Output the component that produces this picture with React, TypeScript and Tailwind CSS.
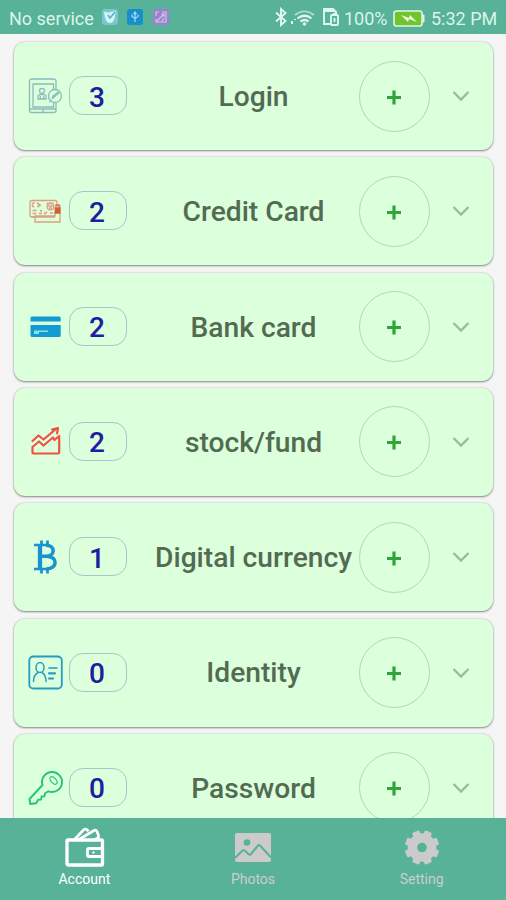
import React from "react";

const LoginIcon = () => (
  <svg viewBox="0 0 36 36" className="h-9 w-9" fill="none" stroke="#8bbcb9" strokeWidth="1.3">
    <path d="M28 11V3a2 2 0 0 0-2-2H3.500a2 2 0 0 0-2 2v29.500a2 2 0 0 0 2 2H26a2 2 0 0 0 2-2V25" />
    <path d="M25.500 11V6H5v23h20.500v-4M1.500 31H28M15 31v3" />
    <circle cx="14" cy="12.800" r="2.500" />
    <path d="M10 21v-3.200l2-1.300h4l2 1.300V21zM12.300 18v3M15.700 18v3" />
    <circle cx="27" cy="18" r="6.500" />
    <path d="m24 21 1-3 5-4 1 1-5 4zM21 24l3-1" />
  </svg>
);

const CreditIcon = () => (
  <svg viewBox="0 0 36 36" className="h-9 w-9" fill="none" stroke="#dda083" strokeWidth="1.300">
    <path d="M29 13v-4a1.500 1.500 0 0 0-1.500-1.500h-24A1.500 1.500 0 0 0 2 9v13.500A1.500 1.500 0 0 0 3.500 24h3" />
    <path d="M28 12.500h4V29H7v-6h20v-4M3.500 24H27" />
    <path d="M4 11.500 6.500 9M4 12.500l2 1.500M9 10l3 2-2.500 2M4.500 17.500h4M4.500 20.500h4M11 20.500h3M12 17.500l2 1M16 21l3-2" strokeWidth="1.700" />
    <circle cx="22.500" cy="13.500" r="3.300" />
    <path d="M18.500 10.500h7M20 13h5M21 15h3M22 20h3" />
    <path d="M27.300 15h4.500v5h-4.500z" fill="#d75b35" stroke="#d75b35" />
    <path d="M28 14v-2h3v2" stroke="#dc7650" />
  </svg>
);

const BankIcon = () => (
  <svg viewBox="0 0 36 36" className="h-9 w-9" fill="#119bd2">
    <path d="M4.200 7.500h27a1.500 1.500 0 0 1 1.500 1.500v3.500H2.500V9A1.500 1.500 0 0 1 4.200 7.500zM2.500 16h30.200v10.500a1.500 1.500 0 0 1-1.500 1.500H4a1.500 1.500 0 0 1-1.500-1.500z" />
    <path d="M6 21.500h14v1.600h-9v2H6z" fill="#8de0df" />
  </svg>
);

const StockIcon = () => (
  <svg viewBox="0 0 36 36" className="h-9 w-9" fill="none" stroke="#ef5143" strokeWidth="2.200" strokeLinecap="round" strokeLinejoin="round">
    <path d="m4.500 17 6-5.500 5 4L28 5M24 5.500l6-1.500-.9 5.500" />
    <path d="M4.500 23 11 17.500l4.500 4L25 13.500l1.500 2.500 4.700-4v16.500a1 1 0 0 1-1 1H5.500a1 1 0 0 1-1-1z" />
  </svg>
);

const BitcoinIcon = () => (
  <svg viewBox="0 0 36 36" className="h-9 w-9" fill="none" stroke="#1793d0">
    <path d="M13.500 1.500v5M19.500 1.500v5M13.500 29.500v5M19.500 29.500v5" strokeWidth="2.700" />
    <path d="M6 6h14M6 30h14" strokeWidth="2.300" />
    <path d="M12 6v24" strokeWidth="4.300" />
    <path d="M18 6.200c9.500 0 9.500 10.800 0 11h-5M18.500 17.200c11.500 0 11.500 12.600 0 12.600" strokeWidth="3.500" />
  </svg>
);

const IdentityIcon = () => (
  <svg viewBox="0 0 36 36" className="h-9 w-9" fill="none" stroke="#229cc6" strokeWidth="1.500" strokeLinecap="round">
    <rect x="1.300" y="1.500" width="32.500" height="32" rx="4" strokeWidth="1.800" />
    <ellipse cx="12" cy="12.500" rx="4" ry="5" />
    <path d="M5.500 26.500c0-5 2-7.500 4.500-9M14 17.500c2.500 1.500 4 4 4 9" />
    <path d="M21 13h8" />
    <path d="M21 18.300h6M21 23.500h4" strokeWidth="2.200" />
  </svg>
);

const KeyIcon = () => (
  <svg viewBox="0 0 36 36" className="h-9 w-9" fill="none" stroke="#20c875" strokeWidth="1.900" strokeLinejoin="round">
    <path d="M14.500 15A10 10 0 1 1 20.500 21.300l-3.500 2-.5 3-3 .2-.3 3-3 .3-2 3.500-6 .7-.7-5z" />
    <ellipse cx="25.500" cy="10.500" rx="2.500" ry="4.500" transform="rotate(-42 25.500 10.500)" strokeWidth="1.200" />
  </svg>
);

const accounts = [
  { title: "Login", count: 3, icon: <LoginIcon /> },
  { title: "Credit Card", count: 2, icon: <CreditIcon /> },
  { title: "Bank card", count: 2, icon: <BankIcon /> },
  { title: "stock/fund", count: 2, icon: <StockIcon /> },
  { title: "Digital currency", count: 1, icon: <BitcoinIcon /> },
  { title: "Identity", count: 0, icon: <IdentityIcon /> },
  { title: "Password", count: 0, icon: <KeyIcon /> },
];

function StatusBar() {
  return (
    <header className="flex h-[34px] shrink-0 items-center bg-[#58b297] pt-[3px] pr-2 pl-[9px] text-[18px] text-[#dbf5eb]">
      <span className="w-[86px] whitespace-nowrap">No service</span>
      <svg viewBox="0 0 16 16" className="-mt-[3px] ml-[7px] h-4 w-4">
        <rect width="16" height="16" rx="3" fill="#75c7d2" />
        <path d="M2 2.500q4 2 8 0l4-.5-1 5q-1 8-6 7-4-1-5-11z" fill="#d8f2ed" />
        <path d="m6 6 2 3 5-6" fill="none" stroke="#4bb4c9" strokeWidth="1.500" />
      </svg>
      <svg viewBox="0 0 16 16" className="-mt-[3px] ml-[9px] h-4 w-4">
        <rect width="16" height="16" rx="3" fill="#168fca" />
        <path d="M8 13V4M5 5.500v2l3 2 3-2v-2M6.500 5 8 3l1.500 2" fill="none" stroke="#9ed6ed" strokeWidth="1.300" />
      </svg>
      <svg viewBox="0 0 16 16" className="-mt-[3px] ml-[10px] h-4 w-4">
        <rect width="16" height="16" rx="2.500" fill="#9a81cb" />
        <path d="M3 7V3h3M9 3h4v10H3v-3M4 12l7-7M8 5h3v3M9 12l2-3" fill="none" stroke="#d3c4e8" strokeWidth="1.200" />
      </svg>
      <svg viewBox="0 0 14 20" className="-mt-[3px] ml-auto h-5 w-[14px]" fill="none" stroke="#e0f7ef" strokeWidth="1.900">
        <path d="m2 5.500 9.500 8.500-4.500 4V2l4.500 4L2 14.500" />
      </svg>
      <svg viewBox="0 0 26 20" className="-mt-[3px] ml-[2px] h-5 w-[26px]" fill="none" stroke="#e0f7ef">
        <path d="M5 8q9-7.500 19 0" strokeWidth="1.700" opacity=".65" />
        <path d="M7.500 11.500q7-5.500 14 0M10.500 14.500q4-3 8 0" strokeWidth="2.200" />
        <circle cx="14.500" cy="17" r="1.300" fill="#e0f7ef" />
        <path d="M2 14v3M5 12v1" strokeWidth="2" />
      </svg>
      <svg viewBox="0 0 18 20" className="-mt-[3px] ml-[6px] h-5 w-[18px]" fill="none" stroke="#e0f7ef" strokeWidth="1.900">
        <path d="M8 17H2V2h9l3 3v3M2 4h10" />
        <rect x="9" y="8" width="7" height="10" rx="1" />
        <path d="M11 7h3M12.500 11v4" />
      </svg>
      <span className="ml-[4px] w-[45px] whitespace-nowrap">100%</span>
      <svg viewBox="0 0 32 18" className="ml-[4px] h-[18px] w-8">
        <rect x="1" y="1" width="28" height="15" rx="2.500" fill="#70c52d" stroke="#def6e9" strokeWidth="1.600" />
        <path d="M29.500 5h1.500v7h-1.500" fill="#def6e9" stroke="#def6e9" />
        <path d="m8 5 8 3 1-3 7 7-8-3-1 3z" fill="#effbd9" />
      </svg>
      <span className="ml-[6px] w-[67px] whitespace-nowrap">5:32 PM</span>
    </header>
  );
}

function AccountCard({ title, count, icon }: { title: string; count: number; icon: React.ReactNode }) {
  return (
    <div className="flex h-[108px] shrink-0 items-center rounded-[11px] bg-[#dcffdc] pl-[14px] shadow-[0_1px_2px_rgba(60,60,60,0.55),0_0_2px_rgba(80,60,80,0.25)]">
      <div className="h-9 w-[35px] shrink-0">{icon}</div>
      <div className="-mt-px ml-[6px] flex h-[39px] w-[58px] shrink-0 items-center justify-center rounded-[14px] border border-[#a9c4c9] pt-[4px] pr-[2px] text-[28px] font-medium text-[#1c20a0]">
        {count}
      </div>
      <h2 className="ml-[21px] w-[211px] shrink-0 pt-[2px] text-center text-[28.200px] font-medium whitespace-nowrap text-[#526b52]">{title}</h2>
      <button className="flex h-[71px] w-[71px] shrink-0 items-center justify-center rounded-full border border-[#b2d7b2]" aria-label={`Add ${title}`}>
        <svg viewBox="0 0 14 15" className="mt-[2px] mr-px h-[15px] w-[14px]" stroke="#30a437" strokeWidth="3.200">
          <path d="M7 .5v14M0 7.500h14" />
        </svg>
      </button>
      <svg viewBox="0 0 18 12" className="ml-[22px] h-3 w-[18px]" fill="none" stroke="#9db99d" strokeWidth="2.300">
        <path d="m1.500 2 7.500 7.500L16.500 2" />
      </svg>
    </div>
  );
}

const gearTeeth = [22.5, 67.5, 112.5, 157.5, 202.5, 247.5, 292.5, 337.5];

function BottomNav() {
  return (
    <nav className="grid h-[82px] shrink-0 grid-cols-3 bg-[#58b297] pt-2 text-[14px] text-[#c9cfcb]">
      <div className="flex flex-col items-center text-white">
        <svg viewBox="0 0 40 42" className="ml-[2px] h-[42px] w-10" fill="none" stroke="white" strokeWidth="2.800" strokeLinejoin="round">
          <rect x="2" y="14" width="35.500" height="25" rx="1" strokeWidth="3.300" />
          <path d="M37 22.500H24q-1.500 0-1.500 1.500v5q0 1.500 1.500 1.500h13" />
          <path d="m9 14 10-10.500q1.500-1 3 .2l1.500 1.500M13 14 29 4.500q2-1 3 1l1.500 4q.5 2-1.500 3L29 14" strokeWidth="2.700" />
          <circle cx="28.500" cy="26.500" r="1.200" fill="white" stroke="none" />
        </svg>
        <span className="pt-px leading-5">Account</span>
      </div>
      <div className="flex flex-col items-center">
        <svg viewBox="0 0 40 42" className="ml-px h-[42px] w-10">
          <rect x="2" y="7" width="36" height="29" rx="2" fill="#cbcbcb" />
          <circle cx="14" cy="16.500" r="3.300" fill="#58b297" />
          <path d="m2 32 7.500-7.500q1-.7 2 0l4.500 4q1 .7 2-.5l7-8.500q1-1 2 0L38 31.500" fill="none" stroke="#58b297" strokeWidth="2" />
        </svg>
        <span className="pt-px leading-5">Photos</span>
      </div>
      <div className="flex flex-col items-center">
        <svg viewBox="0 0 40 42" className="ml-px h-[42px] w-10" fill="#cbcbcb">
          <circle cx="20" cy="21.500" r="14.200" />
          {gearTeeth.map((angle) => (
            <rect key={angle} x="16.200" y="4.300" width="7.600" height="7" rx="1.500" transform={`rotate(${angle} 20 21.500)`} />
          ))}
          <circle cx="20" cy="21.500" r="4.800" fill="#58b297" />
        </svg>
        <span className="pt-px leading-5">Setting</span>
      </div>
    </nav>
  );
}

export default function App() {
  return (
    <div className="flex h-[900px] w-[506px] flex-col overflow-hidden bg-[#f5f5f5] font-[Roboto,sans-serif]">
      <StatusBar />
      <main className="flex min-h-0 flex-1 flex-col gap-[7.330px] overflow-hidden pt-2 pr-[13px] pl-[14px]">
        {accounts.map((account) => (
          <AccountCard key={account.title} {...account} />
        ))}
      </main>
      <BottomNav />
    </div>
  );
}
